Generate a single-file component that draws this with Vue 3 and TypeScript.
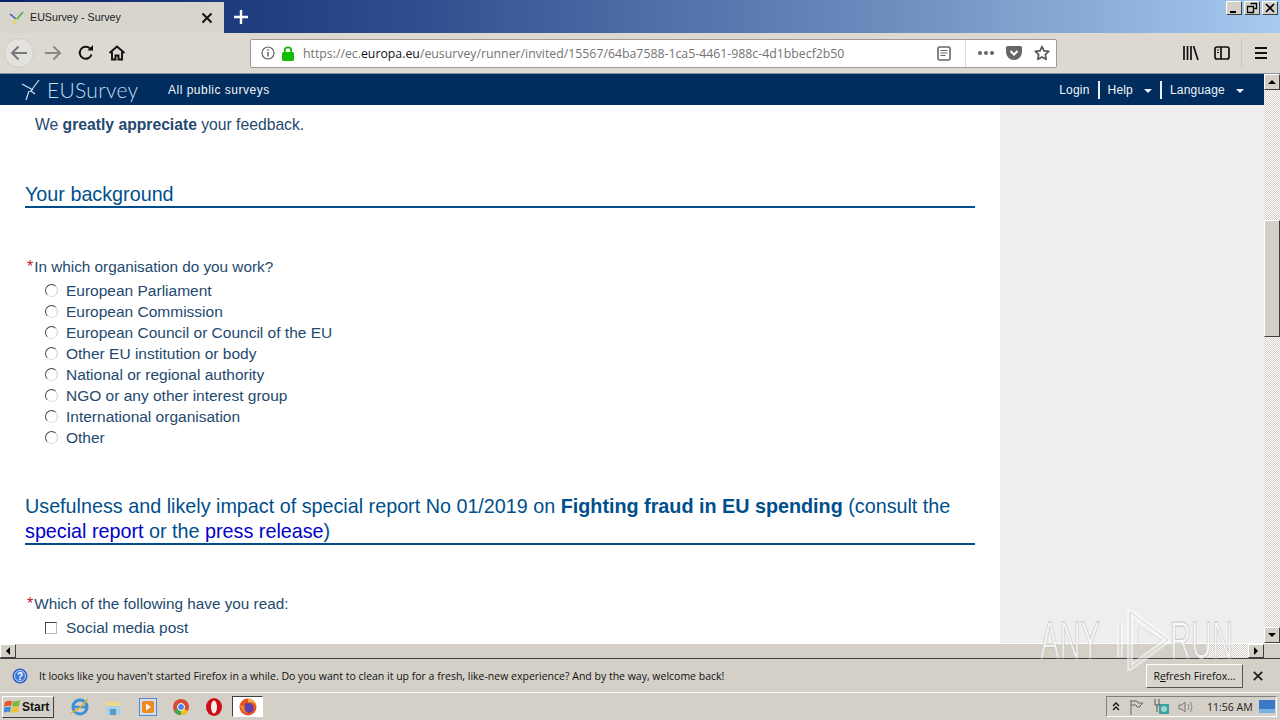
<script setup lang="ts">
const organisations = [
  'European Parliament',
  'European Commission',
  'European Council or Council of the EU',
  'Other EU institution or body',
  'National or regional authority',
  'NGO or any other interest group',
  'International organisation',
  'Other',
]
</script>

<template>
  <div class="window">
    <!-- tab strip -->
    <div class="tabstrip">
      <div class="tab">
        <svg class="favicon" width="16" height="16" viewBox="0 0 16 16">
          <path d="M1 4l6 5" stroke="#3a5fa8" stroke-width="1.6" fill="none" />
          <path d="M14 2L8 9" stroke="#4caf3c" stroke-width="1.6" fill="none" />
          <path d="M7 9l-2 5" stroke="#e8d44a" stroke-width="2" fill="none" />
        </svg>
        <span class="tab-title">EUSurvey - Survey</span>
        <svg class="tab-close" width="12" height="12" viewBox="0 0 12 12">
          <path d="M1.5 1.5l9 9M10.5 1.5l-9 9" stroke="#111" stroke-width="2" />
        </svg>
      </div>
      <svg class="newtab" width="14" height="14" viewBox="0 0 14 14">
        <path d="M7 0v14M0 7h14" stroke="#fff" stroke-width="2.4" />
      </svg>
      <div class="caption">
        <span class="capbtn"><svg width="14" height="12" viewBox="0 0 14 12"><path d="M3 9h6v2H3z" fill="#000" /></svg></span>
        <span class="capbtn"><svg width="14" height="12" viewBox="0 0 14 12"><path d="M5.5 1.5h6v5h-2M2.5 4.5h6v6h-6z" fill="none" stroke="#000" stroke-width="1.3" /></svg></span>
        <span class="capbtn"><svg width="14" height="12" viewBox="0 0 14 12"><path d="M3 2l8 8M11 2l-8 8" stroke="#000" stroke-width="1.7" /></svg></span>
      </div>
    </div>

    <!-- toolbar -->
    <div class="toolbar">
      <span class="back">
        <svg width="18" height="16" viewBox="0 0 18 16"><path d="M17 8H2M8.500 1.500L2 8l6.500 6.500" fill="none" stroke="#777" stroke-width="2" /></svg>
      </span>
      <svg class="tool fwd" width="18" height="16" viewBox="0 0 18 16"><path d="M1 8h15M9.500 1.500L16 8l-6.500 6.500" fill="none" stroke="#8a8a86" stroke-width="2" /></svg>
      <svg class="tool reload" width="16" height="16" viewBox="0 0 16 16"><path d="M13.500 9.500A6 6 0 1 1 12 3.500" fill="none" stroke="#111" stroke-width="2" /><path d="M9.500 5.500h5.500V0z" fill="#111" /></svg>
      <svg class="tool home" width="18" height="16" viewBox="0 0 18 16"><path d="M1.500 8L9 1.500 16.500 8M4 7v7.500h3.500v-4h3v4H14V7" fill="none" stroke="#111" stroke-width="1.900" /></svg>

      <div class="urlbar">
        <svg class="info" width="14" height="14" viewBox="0 0 14 14"><circle cx="7" cy="7" r="6" fill="none" stroke="#666" stroke-width="1.200" /><path d="M7 6v4.500M7 3.200v1.500" stroke="#666" stroke-width="1.500" /></svg>
        <svg class="lock" width="14" height="15" viewBox="0 0 14 15"><rect x="1" y="6" width="12" height="9" rx="1.500" fill="#12bc00" /><path d="M3.800 6.500V4.500a3.200 3.200 0 0 1 6.400 0v2" fill="none" stroke="#12bc00" stroke-width="1.800" /></svg>
        <span class="url">https://ec.<b>europa.eu</b>/eusurvey/runner/invited/15567/64ba7588-1ca5-4461-988c-4d1bbecf2b50</span>
        <svg class="reader" width="14" height="15" viewBox="0 0 14 15"><rect x="1" y="1" width="12" height="13" rx="1.500" fill="none" stroke="#666" stroke-width="1.600" /><path d="M3.500 4.500h7M3.500 7h7M3.500 9.500h5" stroke="#666" stroke-width="1.200" /></svg>
        <span class="url-sep"></span>
        <span class="dots"><i></i><i></i><i></i></span>
        <svg class="pocket" width="16" height="14" viewBox="0 0 16 14"><path d="M1.500 0h13A1.500 1.500 0 0 1 16 1.500V6A8 8 0 0 1 0 6V1.500A1.500 1.500 0 0 1 1.500 0z" fill="#666" /><path d="M4.500 5L8 8.500 11.500 5" fill="none" stroke="#fff" stroke-width="2" /></svg>
        <svg class="star" width="16" height="16" viewBox="0 0 16 16"><path d="M8 1.500l2 4.300 4.700.6-3.400 3.200.9 4.700L8 12l-4.200 2.300.9-4.700L1.300 6.400 6 5.800z" fill="none" stroke="#555" stroke-width="1.700" stroke-linejoin="round" /></svg>
      </div>

      <svg class="tool library" width="16" height="14" viewBox="0 0 16 14"><path d="M1 0v14M4.500 0v14M8 0v14M10.500 0l4.500 14" stroke="#111" stroke-width="1.700" fill="none" /></svg>
      <svg class="tool sidebar" width="16" height="14" viewBox="0 0 16 14"><rect x="1" y="1" width="14" height="12" rx="2" fill="none" stroke="#111" stroke-width="1.700" /><path d="M7 1v12" stroke="#111" stroke-width="1.700" /><path d="M3 4h2M3 6.500h2" stroke="#111" /></svg>
      <span class="tool-sep"></span>
      <svg class="tool menu" width="12" height="12" viewBox="0 0 12 12"><path d="M0 1h12M0 6h12M0 11h12" stroke="#111" stroke-width="1.800" /></svg>
    </div>

    <!-- page area -->
    <div class="viewport">
      <div class="page">
        <nav class="navbar">
          <div class="brand">
            <svg width="20" height="22" viewBox="0 0 20 22">
              <path d="M1 5l11 6M18 1L9 13M8 12l-3 9M10 12l4 3" stroke="#cfe0ee" stroke-width="1.200" fill="none" />
            </svg>
            <span class="brand-name">EUSurvey</span>
          </div>
          <a class="nav-link public">All public surveys</a>
          <div class="nav-right">
            <a class="nav-link">Login</a>
            <span class="nav-sep"></span>
            <a class="nav-link">Help<i class="caret"></i></a>
            <span class="nav-sep"></span>
            <a class="nav-link">Language<i class="caret"></i></a>
          </div>
        </nav>

        <div class="body-row">
          <main class="content">
            <p class="intro">We <b>greatly appreciate</b> your feedback.</p>

            <h2 class="section first">Your background</h2>

            <p class="question q1"><span class="req">*</span>In which organisation do you work?</p>
            <ul class="answers">
              <li v-for="org in organisations" :key="org">
                <span class="radio"></span>{{ org }}
              </li>
            </ul>

            <h2 class="section second">
              Usefulness and likely impact of special report No 01/2019 on <b>Fighting fraud in EU spending</b> (consult the
              <a>special report</a> or the <a>press release</a>)
            </h2>

            <p class="question q2"><span class="req">*</span>Which of the following have you read:</p>
            <ul class="answers checks">
              <li><span class="check"></span>Social media post</li>
              <li><span class="check"></span>Press release</li>
            </ul>
          </main>
          <aside class="side"></aside>
        </div>
      </div>

      <div class="vscroll">
        <span class="sbtn"><i class="arr up"></i></span>
        <div class="vtrack"><span class="vthumb"></span></div>
        <span class="sbtn"><i class="arr down"></i></span>
      </div>
    </div>

    <div class="hscroll">
      <span class="sbtn"><i class="arr left"></i></span>
      <span class="hthumb"></span>
      <span class="htrack"></span>
      <span class="sbtn"><i class="arr right"></i></span>
      <span class="corner"></span>
    </div>

    <!-- notification -->
    <div class="notice">
      <svg width="16" height="16" viewBox="0 0 16 16"><circle cx="8" cy="8" r="7.500" fill="#2f5fc4" /><circle cx="8" cy="8" r="5.500" fill="#3f78dc" stroke="#c8d8f4" /><text x="8" y="11.500" text-anchor="middle" font-size="10" font-weight="700" fill="#fff" font-family="Liberation Sans">?</text></svg>
      <span class="notice-text">It looks like you haven't started Firefox in a while. Do you want to clean it up for a fresh, like-new experience? And by the way, welcome back!</span>
      <button class="refresh">R<u>e</u>fresh Firefox...</button>
      <svg class="notice-close" width="10" height="10" viewBox="0 0 10 10"><path d="M.8.800l8.400 8.400M9.200.800L.8 9.200" stroke="#222" stroke-width="1.800" /></svg>
    </div>

    <!-- taskbar -->
    <footer class="taskbar">
      <button class="start">
        <svg width="17" height="15" viewBox="0 0 17 15">
          <path d="M1 3q3-2 7-1l-1 5Q4 6 0 8z" fill="#e8572a" />
          <path d="M9 2q3 1 7-1l-1 6q-4 1-7 0z" fill="#7fb93c" />
          <path d="M0 9q4-2 7-1l-1 5q-3-1-7 1z" fill="#3d8ee0" />
          <path d="M8 8q3 1 7 0l-1 5q-4 1-7 0z" fill="#f2c230" />
        </svg>
        Start
      </button>
      <svg class="tb" width="20" height="20" viewBox="0 0 20 20"><circle cx="10" cy="10" r="7" fill="none" stroke="#3a8fd8" stroke-width="3" /><path d="M3 10h14" stroke="#3a8fd8" stroke-width="2.500" /><path d="M1 16Q8 14 18 2" fill="none" stroke="#e6b422" stroke-width="1.500" /></svg>
      <svg class="tb tb-folder" width="18" height="18" viewBox="0 0 18 18"><path d="M2 4h14v13H2z" fill="#f0d98a" /><path d="M2 8h14v9H2z" fill="#a8d0e8" /><path d="M6 17v-6h6v6" fill="#5a9cc4" /></svg>
      <svg class="tb tb-wide" width="18" height="18" viewBox="0 0 18 18"><rect x=".5" y=".5" width="17" height="17" fill="#cfe0f2" stroke="#5a88c4" /><rect x="3" y="3" width="12" height="12" rx="2" fill="#f08a1c" /><path d="M7 5.500v7l5-3.500z" fill="#fff" /></svg>
      <svg class="tb" width="16" height="16" viewBox="0 0 16 16"><circle cx="8" cy="8" r="8" fill="#d94a38" /><path d="M8 8L1 12.500A8 8 0 0 0 8 16z" fill="#3aa757" /><path d="M8 8l7 4A8 8 0 0 1 8 16z" fill="#f4c20d" /><circle cx="8" cy="8" r="3.500" fill="#4a86e8" stroke="#fff" /></svg>
      <svg class="tb tb-wide" width="16" height="18" viewBox="0 0 16 18"><ellipse cx="8" cy="9" rx="8" ry="9" fill="#cc0f16" /><ellipse cx="8" cy="9" rx="3" ry="6.500" fill="#f4efe8" /></svg>
      <span class="tb-active">
        <svg width="18" height="18" viewBox="0 0 18 18"><circle cx="9" cy="9" r="8.500" fill="#e8501f" /><circle cx="9.500" cy="10" r="5" fill="#5b3fb0" /><path d="M9 .500a8.500 8.500 0 0 1 8 8q-2-5-8-4z" fill="#fbb040" /><path d="M1 7q1 8 8 8-5-3-3-7z" fill="#f48020" /></svg>
      </span>
      <div class="tray">
        <svg width="8" height="10" viewBox="0 0 8 10"><path d="M1 4l3-3 3 3M1 8l3-3 3 3" fill="none" stroke="#111" stroke-width="1.300" /></svg>
        <svg class="tray-flag" width="16" height="16" viewBox="0 0 16 16"><path d="M2 1v15M2 2h6l1 2h5l-3 3 0 1H8L7 6H2" fill="none" stroke="#666" /></svg>
        <svg class="tray-net" width="17" height="17" viewBox="0 0 17 17"><rect x="6" y="6" width="10" height="10" fill="#3aa0a0" /><circle cx="11" cy="11" r="3" fill="#9ad8c8" /><path d="M2 1v6h4V1M4 7v7" fill="none" stroke="#555" /></svg>
        <svg class="tray-vol" width="16" height="16" viewBox="0 0 16 16"><path d="M1 6h3l3-3v10l-3-3H1z" fill="none" stroke="#777" /><path d="M10 5q2 3 0 6M12.500 3q3 5 0 10" fill="none" stroke="#888" /></svg>
        <span class="clock">11:56 AM</span>
        <svg class="tray-desk" width="16" height="13" viewBox="0 0 16 13"><rect width="16" height="13" fill="#3a78c8" /><rect y="9" width="16" height="4" fill="#7ab0e0" /></svg>
      </div>
    </footer>

    <!-- watermark over the page -->
    <div class="watermark">
      <span class="wm-word">ANY</span>
      <svg class="wm-play" width="58" height="62" viewBox="0 0 58 62">
        <path d="M8 14v34M18 3v56l38-28z" fill="none" stroke="#fff" stroke-width="6" opacity=".7" />
        <path d="M8 14v34M18 3v56l38-28z" fill="none" stroke="#aaa" stroke-width="1" opacity=".6" />
        <path d="M26 17v28l24-14z" fill="none" stroke="#ccc" stroke-width="1" opacity=".6" />
      </svg>
      <span class="wm-word">RUN</span>
    </div>
  </div>
</template>

<style scoped>
.window {
  position: relative;
  width: 1280px;
  height: 720px;
  display: flex;
  flex-direction: column;
  overflow: hidden;
  background: #d4d0c8;
  font-family: "Liberation Sans", Arial, sans-serif;
}

/* tab strip */
.tabstrip {
  height: 33px;
  flex: none;
  display: flex;
  align-items: center;
  background: linear-gradient(90deg, #0a246a 0%, #2c4a8c 30%, #6d8fbf 70%, #a6caf0 100%);
}
.tab {
  width: 224px;
  height: 31px;
  margin-top: 2px;
  flex: none;
  display: flex;
  align-items: center;
  padding: 0 11px 0 9px;
  box-sizing: border-box;
  background: #d8d5cd;
}
.tab-title {
  flex: 1;
  margin-left: 5px;
  margin-top: -2px;
  font-size: 10.700px;
  color: #222;
}
.newtab {
  margin-left: 10px;
}
.caption {
  margin-left: auto;
  margin-right: 2px;
  margin-bottom: 17px;
  display: flex;
  gap: 2px;
}
.capbtn {
  width: 16px;
  height: 14px;
  display: flex;
  align-items: center;
  justify-content: center;
  background: #d4d0c8;
  border: 1px solid;
  border-color: #fff #404040 #404040 #fff;
  box-sizing: border-box;
}

/* toolbar */
.toolbar {
  height: 41px;
  flex: none;
  display: flex;
  align-items: center;
  background: #dcd9d1;
  border-bottom: 1px solid #8a94a4;
  box-sizing: border-box;
}
.back {
  width: 30px;
  height: 30px;
  margin-left: 4px;
  flex: none;
  display: flex;
  align-items: center;
  justify-content: center;
  border-radius: 50%;
  background: #e4e2dc;
  border: 1px solid #cfccc4;
  box-sizing: border-box;
}
.tool {
  flex: none;
}
.fwd {
  margin-left: 10px;
}
.reload {
  margin-left: 16px;
}
.home {
  margin-left: 14px;
}
.urlbar {
  width: 807px;
  height: 29px;
  margin-left: 124px;
  flex: none;
  display: flex;
  align-items: center;
  padding: 0 6px 0 10px;
  box-sizing: border-box;
  background: #fff;
  border: 1px solid #9c9a94;
  border-radius: 2px;
}
.lock {
  margin-left: 6px;
}
.url {
  flex: 1;
  margin-left: 8px;
  font-family: "Open Sans", sans-serif;
  font-size: 12.300px;
  color: #737373;
  white-space: nowrap;
}
.url b {
  font-weight: 400;
  color: #111;
}
.url-sep {
  width: 1px;
  height: 27px;
  margin: 0 12px 0 14px;
  background: #dcdcdc;
}
.dots {
  display: flex;
  gap: 2px;
  margin-right: 12px;
}
.dots i {
  width: 4px;
  height: 4px;
  border-radius: 50%;
  background: #666;
}
.star {
  margin-left: 12px;
}
.library {
  margin-left: 126px;
}
.sidebar {
  margin-left: 15px;
}
.tool-sep {
  width: 1px;
  height: 30px;
  margin: 0 13px 0 11px;
  background: #cbc8c0;
}

/* page */
.viewport {
  height: 569px;
  flex: none;
  display: flex;
  overflow: hidden;
}
.page {
  width: 1264px;
  display: flex;
  flex-direction: column;
}
.navbar {
  height: 31px;
  flex: none;
  display: flex;
  align-items: center;
  padding: 0 20px 0 21px;
  background: #002c5e;
}
.brand {
  display: flex;
  align-items: center;
  width: 147px;
}
.brand-name {
  margin-left: 6px;
  font-family: Lato, sans-serif;
  font-size: 21px;
  font-weight: 300;
  letter-spacing: 0.300px;
  color: #c4dcec;
}
.nav-link {
  display: flex;
  align-items: center;
  font-family: "Liberation Sans", sans-serif;
  font-size: 12px;
  letter-spacing: 0.200px;
  color: #f0f4f8;
}
.public {
  letter-spacing: 0.500px;
}
.nav-right {
  margin-left: auto;
  display: flex;
  align-items: center;
}
.nav-sep {
  width: 2px;
  height: 18px;
  margin: 0 8px;
  background: #e8eef4;
}
.caret {
  width: 0;
  height: 0;
  margin-left: 11px;
  margin-top: 3px;
  border: 4px solid transparent;
  border-top-color: #f0f4f8;
  border-bottom: 0;
}
.body-row {
  flex: 1;
  display: flex;
  overflow: hidden;
}
.content {
  width: 1000px;
  flex: none;
  padding: 0 25px;
  box-sizing: border-box;
  background: #fff;
  color: #24496e;
  font-size: 15.500px;
}
.side {
  flex: 1;
  background: #eeeeee;
}
.intro {
  margin: 11px 0 0 10px;
  font-size: 15.700px;
  line-height: 18px;
}
.section {
  margin: 0;
  border-bottom: 2px solid #004f8c;
  font-size: 19.750px;
  font-weight: 400;
  line-height: 25px;
  color: #004f8c;
}
.section b {
  font-weight: 700;
}
.section a {
  color: #0000cc;
}
.first {
  height: 24px;
  margin-top: 48px;
}
.second {
  height: 49px;
  margin-top: 46px;
}
.question {
  margin: 0 0 0 2px;
  font-size: 15.300px;
  line-height: 18px;
}
.q1 {
  margin-top: 50px;
}
.q2 {
  margin-top: 50px;
}
.req {
  margin-right: 1px;
  color: #c8102e;
  font-size: 16px;
}
.answers {
  margin: 4px 0 0;
  padding: 0 0 0 20px;
  list-style: none;
}
.answers li {
  display: flex;
  align-items: center;
  height: 21px;
}
.radio {
  width: 11px;
  height: 11px;
  margin-right: 8px;
  flex: none;
  border-radius: 50%;
  background: #fff;
  border: 1px solid;
  border-color: #444 #ccc #ddd #444;
  box-sizing: content-box;
}
.check {
  width: 10px;
  height: 10px;
  margin-right: 9px;
  flex: none;
  background: #fff;
  border: 1px solid;
  border-color: #444 #bbb #bbb #444;
}

/* scrollbars */
.vscroll {
  width: 16px;
  flex: none;
  display: flex;
  flex-direction: column;
}
.vtrack {
  flex: 1;
  padding-top: 130px;
  background: repeating-conic-gradient(#d4d0c8 0 25%, #fff 0 50%) 0 0 / 2px 2px;
}
.vthumb {
  display: block;
  height: 117px;
  background: #d4d0c8;
  border: 1px solid;
  border-color: #fff #404040 #404040 #fff;
  box-sizing: border-box;
}
.sbtn {
  width: 16px;
  height: 16px;
  flex: none;
  display: flex;
  align-items: center;
  justify-content: center;
  background: #d4d0c8;
  border: 1px solid;
  border-color: #fff #404040 #404040 #fff;
  box-sizing: border-box;
}
.arr {
  width: 0;
  height: 0;
  border: 4px solid transparent;
}
.arr.up {
  border-top: 0;
  border-bottom-color: #000;
}
.arr.down {
  border-bottom: 0;
  border-top-color: #000;
}
.arr.left {
  border-left: 0;
  border-right-color: #000;
}
.arr.right {
  border-right: 0;
  border-left-color: #000;
}
.hscroll {
  height: 16px;
  flex: none;
  display: flex;
  background: #d4d0c8;
  border-top: 1px solid #fff;
  border-bottom: 1px solid #404040;
  box-sizing: border-box;
}
.hscroll .sbtn {
  height: 14px;
}
.hthumb {
  flex: 0 0 1190px;
  background: #d4d0c8;
}
.htrack {
  flex: 1;
  background: repeating-conic-gradient(#d4d0c8 0 25%, #fff 0 50%) 0 0 / 2px 2px;
}
.corner {
  width: 16px;
  flex: none;
  background: #d4d0c8;
}

/* notification */
.notice {
  height: 34px;
  flex: none;
  display: flex;
  align-items: center;
  padding: 0 17px 0 12px;
  box-sizing: border-box;
  background: #d4d0c8;
  border-bottom: 1px solid #fff;
}
.notice-text {
  flex: 1;
  margin-left: 11px;
  font-family: "Open Sans", sans-serif;
  font-size: 10.500px;
  color: #111;
}
.refresh {
  width: 97px;
  height: 24px;
  padding: 0;
  font-family: "Open Sans", sans-serif;
  font-size: 10.500px;
  color: #111;
  background: #d8d5cd;
  border: 1px solid;
  border-color: #fff #555 #555 #fff;
}
.notice-close {
  margin-left: 10px;
}

/* taskbar */
.taskbar {
  height: 27px;
  flex: none;
  display: flex;
  align-items: center;
  background: #d4d0c8;
  padding: 0 3px 0 2px;
}
.start {
  width: 52px;
  height: 22px;
  padding: 0 0 0 1px;
  display: flex;
  align-items: center;
  gap: 1px;
  font-family: "Liberation Sans", sans-serif;
  font-size: 12px;
  font-weight: 700;
  color: #111;
  background: #d4d0c8;
  border: 1px solid;
  border-color: #fff #404040 #404040 #fff;
}
.tb {
  flex: none;
  margin-left: 16px;
}
.tb-folder {
  margin-left: 14px;
}
.tb-wide {
  margin-left: 17px;
}
.tb-active {
  width: 31px;
  height: 21px;
  margin-left: 10px;
  flex: none;
  display: flex;
  align-items: center;
  justify-content: center;
  background: #fff;
  border: 1px solid;
  border-color: #404040 #fff #fff #404040;
  box-sizing: border-box;
}
.tray {
  margin-left: auto;
  width: 171px;
  height: 21px;
  display: flex;
  align-items: center;
  padding: 0 1px 0 5px;
  box-sizing: border-box;
  border: 1px solid;
  border-color: #808080 #fff #fff #808080;
}
.tray-flag {
  margin-left: 9px;
}
.tray-net {
  margin-left: 8px;
}
.tray-vol {
  margin-left: 8px;
}
.clock {
  margin-left: 13px;
  font-family: "Open Sans", sans-serif;
  font-size: 10.500px;
  color: #222;
}
.tray-desk {
  margin-left: auto;
}

/* any.run watermark */
.watermark {
  position: absolute;
  left: 1040px;
  top: 609px;
  height: 62px;
  display: flex;
  align-items: center;
  color: #fff;
  font-family: "Liberation Sans", sans-serif;
  font-size: 52px;
  line-height: 62px;
  -webkit-text-stroke: 1px #b5b5b5;
  opacity: 0.7;
  pointer-events: none;
}
.wm-word {
  display: block;
  width: 60px;
  white-space: nowrap;
  transform: scaleX(0.56);
  transform-origin: left center;
}
.wm-play {
  margin-left: 12px;
}
</style>

<style>
body {
  overflow: hidden;
}
</style>
